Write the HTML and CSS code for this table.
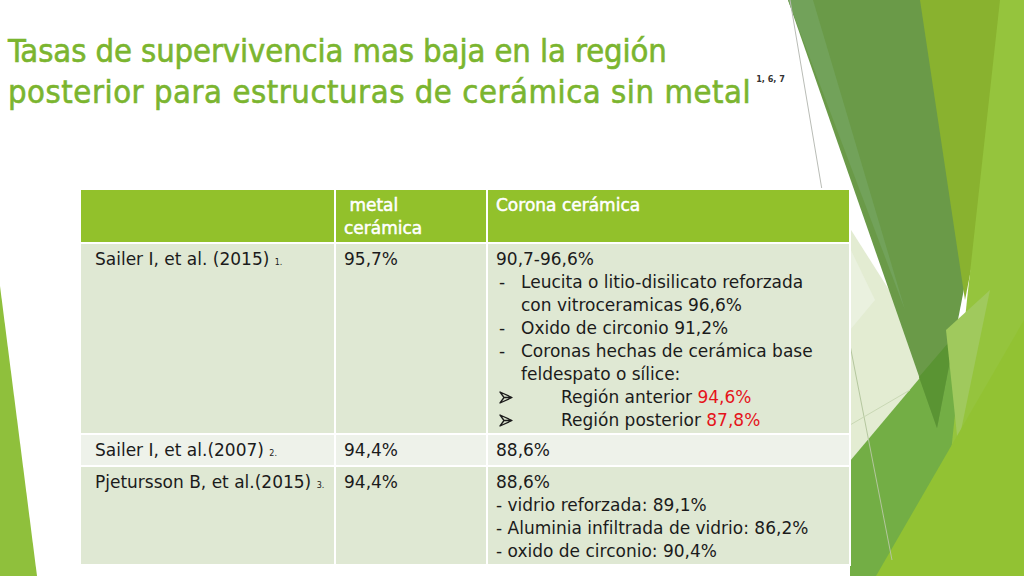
FILE: index.html
```html
<!DOCTYPE html>
<html lang="es">
<head>
<meta charset="utf-8">
<title>Tasas de supervivencia</title>
<link rel="stylesheet" href="styles.css">
</head>
<body>
<div class="slide">
  <svg class="decor" viewBox="0 0 1024 576" aria-hidden="true">
    <polygon points="0,286 37,576 0,576" fill="#8fc03c"/>
    <polygon points="846,222 945,378 850,470" fill="#e3ecd2"/>
    <polygon points="846,240 875,300 850,330" fill="#eaf1df"/>
    <polygon points="850,461 1024,254 1024,576 850,576" fill="#73ae45"/>
    <polygon points="788,0 1020,0 937,428" fill="#6a9a48"/>
    <polygon points="919,377 955,335 937,428" fill="#5a9433"/>
    <polygon points="788,0 813,0 905,310" fill="#72a25a"/>
    <polygon points="920,0 1024,0 965,300" fill="#89b22f"/>
    <polygon points="1000,0 1024,0 1024,576 938,576 967,300" fill="#95c43d"/>
    <polygon points="946,330 990,290 958,445" fill="#a0c95d"/>
    <polygon points="876,576 1024,320 1024,576" fill="#92c233"/>
    <line x1="790" y1="0" x2="822" y2="190" stroke="#b9bcb6" stroke-width="1"/>
    <line x1="850" y1="345" x2="892" y2="560" stroke="#b4c69e" stroke-width="1"/>
    <line x1="850" y1="425" x2="910" y2="390" stroke="#c9d8b4" stroke-width="1"/>
  </svg>

  <h1 class="title"><span class="l1">Tasas de supervivencia mas baja en la región</span><br><span class="l2">posterior para estructuras de cerámica sin metal</span><span class="refs">1, 6, 7</span></h1>

  <table class="data">
    <colgroup>
      <col class="c1"><col class="c2"><col class="c3">
    </colgroup>
    <thead>
      <tr>
        <th class="first"></th>
        <th>&nbsp;metal<br>cerámica</th>
        <th>Corona cerámica</th>
      </tr>
    </thead>
    <tbody>
      <tr class="odd">
        <td class="first">Sailer I, et al. (2015) <span class="cite">1.</span></td>
        <td>95,7%</td>
        <td class="wide">
          <div>90,7-96,6%</div>
          <div class="li"><span class="mk">-</span><span>Leucita o litio-disilicato reforzada con vitroceramicas 96,6%</span></div>
          <div class="li"><span class="mk">-</span><span>Oxido de circonio 91,2%</span></div>
          <div class="li"><span class="mk">-</span><span>Coronas hechas de cerámica base feldespato o sílice:</span></div>
          <div class="li arrow"><span class="mk"><svg class="ah" viewBox="0 0 14 13" aria-hidden="true"><path d="M1 1 L13 6.5 L1 12 L5 6.5 Z M5 6.5 L13 6.5" fill="none" stroke="#1b1b1b" stroke-width="1.3" stroke-linejoin="round"/></svg></span><span>Región anterior <span class="red">94,6%</span></span></div>
          <div class="li arrow"><span class="mk"><svg class="ah" viewBox="0 0 14 13" aria-hidden="true"><path d="M1 1 L13 6.5 L1 12 L5 6.5 Z M5 6.5 L13 6.5" fill="none" stroke="#1b1b1b" stroke-width="1.3" stroke-linejoin="round"/></svg></span><span>Región posterior <span class="red">87,8%</span></span></div>
        </td>
      </tr>
      <tr class="even">
        <td class="first">Sailer I, et al.(2007) <span class="cite">2.</span></td>
        <td>94,4%</td>
        <td>88,6%</td>
      </tr>
      <tr class="odd">
        <td class="first">Pjetursson B, et al.(2015) <span class="cite">3.</span></td>
        <td>94,4%</td>
        <td>
          <div>88,6%</div>
          <div>- vidrio reforzada: 89,1%</div>
          <div>- Aluminia infiltrada de vidrio: 86,2%</div>
          <div>- oxido de circonio: 90,4%</div>
        </td>
      </tr>
    </tbody>
  </table>
</div>
</body>
</html>
```

FILE: styles.css
```css
* { box-sizing: border-box; }
html, body { margin: 0; padding: 0; background: #ffffff; }
.slide {
  position: relative;
  width: 1024px;
  height: 576px;
  overflow: hidden;
  background: #ffffff;
  font-family: "DejaVu Sans", Tahoma, sans-serif;
  display: flex;
  flex-direction: column;
  align-items: flex-start;
}
.decor {
  position: absolute;
  left: 0;
  top: 0;
  width: 1024px;
  height: 576px;
  z-index: 0;
}
.title {
  position: relative;
  z-index: 1;
  margin: 0;
  padding: 31px 0 0 8px;
  width: 820px;
  font-size: 32.5px;
  line-height: 41px;
  font-weight: normal;
  font-stretch: condensed;
  color: #7bb52f;
  -webkit-text-stroke: 0.6px #7bb52f;
  white-space: nowrap;
}
.l1 { letter-spacing: -0.1px; }
.l2 { letter-spacing: 0.55px; }
.refs {
  font-size: 9px;
  line-height: 0;
  color: #333;
  font-weight: bold;
  vertical-align: 21px;
  margin-left: 5px;
  letter-spacing: 0;
  -webkit-text-stroke: 0;
}
.data {
  position: relative;
  z-index: 1;
  margin: 75px 0 0 79px;
  border-collapse: separate;
  border-spacing: 2px;
  background: #ffffff;
  table-layout: fixed;
  width: 772px;
  font-size: 17px;
  line-height: 23px;
  color: #1b1b1b;
}
.c1 { width: 253px; }
.c2 { width: 150px; }
.c3 { width: 361px; }
.data th, .data td {
  padding: 4px 8px 1px 8px;
  vertical-align: top;
  text-align: left;
}
.data td.wide { padding-right: 16px; }
.data th {
  background: #92c12b;
  color: #ffffff;
  font-weight: normal;
  -webkit-text-stroke: 0.5px #ffffff;
  padding-bottom: 2px;
}
.data td.first { padding-left: 14px; }
.odd td { background: #dfe8d3; }
.even td { background: #eef2ea; padding-bottom: 3px; }
.cite { font-size: 8px; line-height: 1; }
.li { display: flex; }
.li .mk { width: 25px; flex: none; padding-left: 3px; }
.li.arrow .mk {
  width: 65px;
  display: flex;
  align-items: center;
  height: 23px;
}
.ah { width: 14px; height: 13px; display: block; }
.red { color: #e5141b; }
```
